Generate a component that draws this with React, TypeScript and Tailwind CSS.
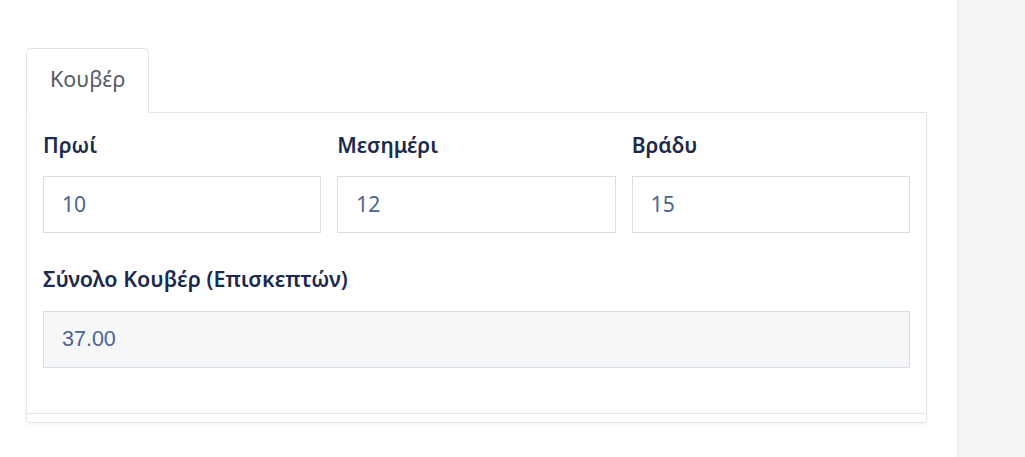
import React from "react";

function Field({ label, value }: { label: string; value: string }) {
  return (
    <div className="flex flex-col">
      <label className="text-[21px] font-semibold text-[#1c2a4d] leading-[24px] mb-[19px] mt-[20px]">{label}</label>
      <div className="h-[57px] border border-[#d9dde5] bg-white flex items-center pl-[18px] text-[21px] text-[#4b6491]">
        {value}
      </div>
    </div>
  );
}

export default function App() {
  return (
    <div className="flex w-[1025px] h-[457px] bg-white overflow-hidden" style={{ fontFamily: '"Noto Sans", "Open Sans", sans-serif' }}>
      <div className="flex-1 pl-[26px] pr-[30px] pt-[48px]">
        <div className="flex">
          <div className="w-[123px] h-[65px] -mb-px relative z-10 bg-white border border-b-white border-[#dfe2e8] rounded-t-[5px] flex items-center pl-[23px] pb-[2px] text-[21.5px] text-[#555b63]">
            Κουβέρ
          </div>
        </div>
        <div className="rounded-b-[4px] border-x border-b border-[#e2e5ea] shadow-[0_2px_4px_rgba(0,0,0,0.05)] pb-[8px]">
          <div className="border border-[#e2e5ea] border-l-0 border-r-0 pl-[16px] pr-[16px] pb-[45px]">
            <div className="grid grid-cols-3 gap-[16px]">
              <Field label="Πρωί" value="10" />
              <Field label="Μεσημέρι" value="12" />
              <Field label="Βράδυ" value="15" />
            </div>
            <div className="flex flex-col">
              <label className="text-[21.5px] font-semibold text-[#1c2a4d] leading-[24px] mt-[34px] mb-[20px]">Σύνολο Κουβέρ (Επισκεπτών)</label>
              <div className="h-[57px] border border-[#d9dde5] bg-[#f6f7f9] flex items-center pl-[18px] text-[21.5px] text-[#4b6491]" style={{ fontFamily: '"Liberation Sans", Arial, sans-serif' }}>
                37.00
              </div>
            </div>
          </div>
        </div>
      </div>
      <div className="w-[68px] h-full bg-[#f5f4f2] border-l border-[#e6e6e6]" />
    </div>
  );
}
